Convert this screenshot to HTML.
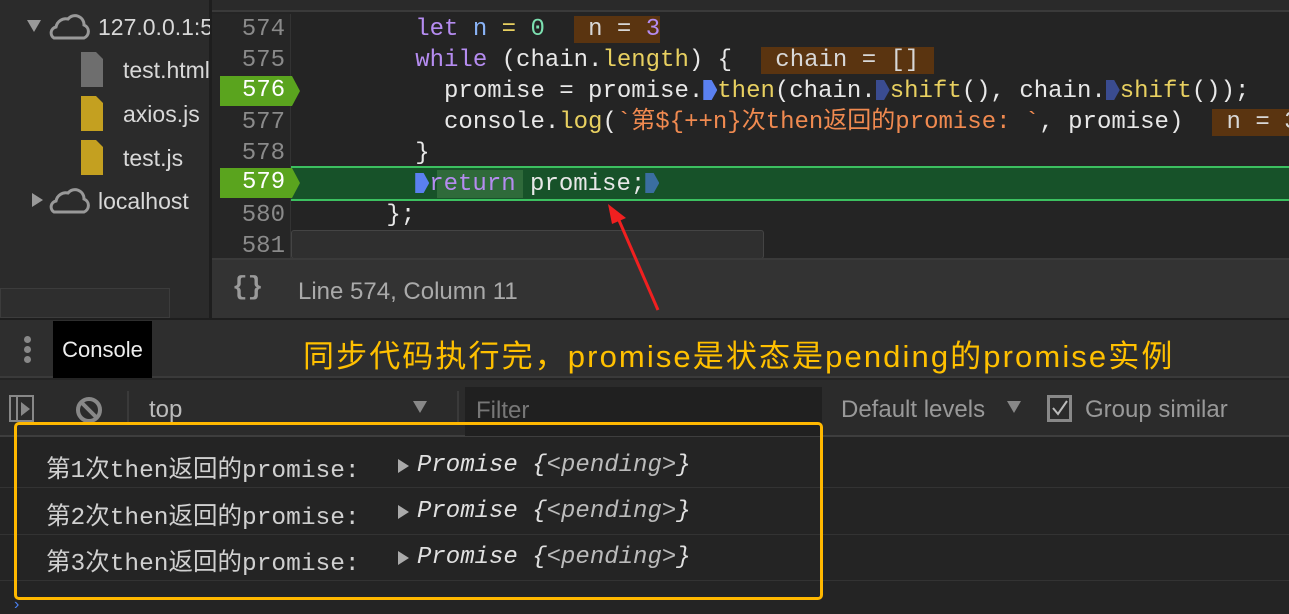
<!DOCTYPE html>
<html><head><meta charset="utf-8"><style>
*{margin:0;padding:0;box-sizing:border-box}
body{width:1289px;height:610px;overflow:hidden;background:#242424;position:relative;font-family:"Liberation Sans","Noto Sans CJK SC",sans-serif}
.abs{position:absolute}
.mono{font-family:"Liberation Mono","Noto Sans CJK SC",monospace;font-size:24px;white-space:pre}
.side{left:0;top:0;width:210px;height:318px;background:#2b2b2b}
.st{color:#d8d8d8;font-size:23px;white-space:nowrap}
.ln{color:#8a8a8a;text-align:right;width:72px;left:213px}
.code{left:300px;color:#e8e8e8}
.kw{color:#b58cf0}.num{color:#7ce0b0}.fn{color:#e8d060}.str{color:#f08a50}.var{color:#8ab4f8}
.val{background:#5a3410;color:#d8d8d8}
.bp{position:absolute;left:220px;width:80px;height:30px;background:#5aa41e;color:#fff;clip-path:polygon(0 0,72px 0,80px 50%,72px 100%,0 100%);padding-left:22px}
.mk{display:inline-block;width:14px;height:20px;vertical-align:-3px;clip-path:polygon(0 0,60% 0,100% 50%,60% 100%,0 100%)}
.cm{color:#d0d0d0;font-family:"Liberation Mono","Noto Sans CJK SC",monospace;font-size:24.5px;white-space:pre}
.pr{font-style:italic;color:#e0e0e0;font-size:24px}
</style></head><body>
<div class="abs side"></div>
<div class="abs" style="left:0;top:288px;width:170px;height:30px;border:1px solid #3c3c3c;background:#2e2e2e"></div>
<div class="abs" style="left:209px;top:0;width:3px;height:318px;background:#1e1e1e"></div>
<div class="abs" style="left:27px;top:20px;width:0;height:0;border-left:7px solid transparent;border-right:7px solid transparent;border-top:12px solid #999"></div>
<svg class="abs" style="left:48px;top:14px" width="42" height="26"><path d="M6 24 H36 A7 7 0 0 0 36 11 A9 9 0 0 0 20 5 A10 10 0 0 0 8 13 A6 6 0 0 0 6 24Z" fill="none" stroke="#999" stroke-width="3"/></svg>
<div class="abs st" style="left:98px;top:14px;width:112px;overflow:hidden">127.0.0.1:5</div>
<svg class="abs" style="left:81px;top:52px" width="24" height="36"><path d="M0 0H15L22 7V35H0Z" fill="#6e6e6e"/></svg>
<div class="abs st" style="left:123px;top:57px;width:87px;overflow:hidden">test.html</div>
<svg class="abs" style="left:81px;top:96px" width="24" height="36"><path d="M0 0H15L22 7V35H0Z" fill="#c4a020"/></svg>
<div class="abs st" style="left:123px;top:101px">axios.js</div>
<svg class="abs" style="left:81px;top:140px" width="24" height="36"><path d="M0 0H15L22 7V35H0Z" fill="#c4a020"/></svg>
<div class="abs st" style="left:123px;top:145px">test.js</div>
<div class="abs" style="left:32px;top:193px;width:0;height:0;border-top:7px solid transparent;border-bottom:7px solid transparent;border-left:11px solid #999"></div>
<svg class="abs" style="left:48px;top:188px" width="42" height="26"><path d="M6 24 H36 A7 7 0 0 0 36 11 A9 9 0 0 0 20 5 A10 10 0 0 0 8 13 A6 6 0 0 0 6 24Z" fill="none" stroke="#999" stroke-width="3"/></svg>
<div class="abs st" style="left:98px;top:188px">localhost</div>
<div class="abs" style="left:212px;top:0;width:1077px;height:12px;background:#2a2a2a;border-bottom:2px solid #3a3a3a"></div>
<div class="abs" style="left:212px;top:14px;width:79px;height:246px;background:#262626;border-right:1px solid #333"></div>
<div class="abs" style="left:291px;top:166px;width:998px;height:35px;background:#175229;border-top:2px solid #3cc060;border-bottom:2px solid #3cc060"></div>
<div class="abs" style="left:437px;top:170px;width:86px;height:28px;background:#2f6a3a"></div>
<div class="abs mono ln" style="top:14px;line-height:31px">574
575

577
578

580
581</div>
<div class="bp abs mono" style="top:76px;line-height:30px">576</div>
<div class="bp abs mono" style="top:168px;line-height:30px">579</div>
<div class="abs mono code" style="top:14px;line-height:31px">        <span class="kw">let</span> <span class="var">n</span> <span class="fn">=</span> <span class="num">0</span>  <span class="val"> n = <span class="kw">3</span></span>
        <span class="kw">while</span> (chain.<span class="fn">length</span>) {  <span class="val"> chain = [] </span>
          promise = promise.<span class="mk" style="background:#5a80f0"></span><span class="fn">then</span>(chain.<span class="mk" style="background:#3a4c90"></span><span class="fn">shift</span>(), chain.<span class="mk" style="background:#3a4c90"></span><span class="fn">shift</span>());
          console.<span class="fn">log</span>(<span class="str">`第${++n}次then返回的promise: `</span>, promise)  <span class="val"> n = 3 </span>
        }
        <span class="mk" style="background:#5a80f0"></span><span class="kw">return</span> promise;<span class="mk" style="background:#3a6ea0"></span>
      };</div>
<div class="abs" style="left:291px;top:230px;width:473px;height:29px;background:#2f2f2f;border:1px solid #444;border-radius:3px"></div>
<div class="abs" style="left:212px;top:258px;width:1077px;height:2px;background:#3a3a3a"></div>
<div class="abs" style="left:212px;top:260px;width:1077px;height:58px;background:#333"></div>
<div class="abs" style="left:232px;top:272px;color:#9a9a9a;font-size:26px;font-weight:bold;font-family:'Liberation Mono',monospace">{}</div>
<div class="abs" style="left:298px;top:278px;color:#aaa;font-size:24px">Line 574, Column 11</div>
<svg class="abs" style="left:600px;top:200px" width="70" height="115"><path d="M58 110 L18 18" stroke="#f02020" stroke-width="3"/><path d="M8 4 L26 18 L12 24Z" fill="#f02020"/></svg>
<div class="abs" style="left:0;top:318px;width:1289px;height:2px;background:#1e1e1e"></div>
<div class="abs" style="left:0;top:320px;width:1289px;height:58px;background:#2e2e2e;border-bottom:2px solid #3a3a3a"></div>
<div class="abs" style="left:24px;top:336px;width:7px;height:7px;border-radius:50%;background:#888;box-shadow:0 10px 0 #888,0 20px 0 #888"></div>
<div class="abs" style="left:53px;top:321px;width:99px;height:57px;background:#000;color:#eee;font-size:22px;line-height:57px;text-align:center">Console</div>
<div class="abs" style="left:303px;top:331px;color:#ffc000;font-size:31px;letter-spacing:2.1px;white-space:nowrap">同步代码执行完，promise是状态是pending的promise实例</div>
<div class="abs" style="left:0;top:380px;width:1289px;height:57px;background:#2b2b2b;border-bottom:2px solid #3e3e3e"></div>
<div class="abs" style="left:9px;top:395px;width:25px;height:27px;border:2px solid #888"></div>
<div class="abs" style="left:16px;top:395px;width:2px;height:27px;background:#888"></div>
<div class="abs" style="left:21px;top:402px;border-top:7px solid transparent;border-bottom:7px solid transparent;border-left:9px solid #888"></div>
<svg class="abs" style="left:74px;top:395px" width="30" height="30"><circle cx="15" cy="15" r="11" fill="none" stroke="#888" stroke-width="4"/><path d="M7 7 L23 23" stroke="#888" stroke-width="4"/></svg>
<div class="abs" style="left:127px;top:391px;width:2px;height:34px;background:#3a3a3a"></div>
<div class="abs" style="left:149px;top:396px;color:#bbb;font-size:24px">top</div>
<div class="abs" style="left:413px;top:401px;border-left:7px solid transparent;border-right:7px solid transparent;border-top:12px solid #888"></div>
<div class="abs" style="left:457px;top:391px;width:2px;height:34px;background:#3a3a3a"></div>
<div class="abs" style="left:465px;top:387px;width:357px;height:49px;background:#202020"></div>
<div class="abs" style="left:476px;top:397px;color:#777;font-size:24px">Filter</div>
<div class="abs" style="left:841px;top:396px;color:#999;font-size:24px">Default levels</div>
<div class="abs" style="left:1007px;top:401px;border-left:7px solid transparent;border-right:7px solid transparent;border-top:12px solid #888"></div>
<div class="abs" style="left:1047px;top:395px;width:25px;height:27px;border:3px solid #888"></div>
<svg class="abs" style="left:1050px;top:398px" width="20" height="20"><path d="M3 10 L8 16 L17 3" fill="none" stroke="#bbb" stroke-width="2"/></svg>
<div class="abs" style="left:1085px;top:396px;color:#999;font-size:24px">Group similar</div>
<div class="abs" style="left:0;top:487px;width:1289px;height:1px;background:#333"></div>
<div class="abs" style="left:0;top:534px;width:1289px;height:1px;background:#333"></div>
<div class="abs" style="left:0;top:580px;width:1289px;height:1px;background:#333"></div>
<div class="abs cm" style="left:46px;top:450px">第1次then返回的promise:</div>
<div class="abs cm" style="left:46px;top:497px">第2次then返回的promise:</div>
<div class="abs cm" style="left:46px;top:543px">第3次then返回的promise:</div>
<div class="abs" style="left:398px;top:459px;border-top:7px solid transparent;border-bottom:7px solid transparent;border-left:11px solid #aaa"></div>
<div class="abs" style="left:398px;top:505px;border-top:7px solid transparent;border-bottom:7px solid transparent;border-left:11px solid #aaa"></div>
<div class="abs" style="left:398px;top:551px;border-top:7px solid transparent;border-bottom:7px solid transparent;border-left:11px solid #aaa"></div>
<div class="abs cm pr" style="left:417px;top:452px">Promise {<span style="color:#bbb">&lt;pending&gt;</span>}</div>
<div class="abs cm pr" style="left:417px;top:498px">Promise {<span style="color:#bbb">&lt;pending&gt;</span>}</div>
<div class="abs cm pr" style="left:417px;top:544px">Promise {<span style="color:#bbb">&lt;pending&gt;</span>}</div>
<div class="abs" style="left:14px;top:422px;width:809px;height:178px;border:3px solid #ffb800;border-radius:5px"></div>
<div class="abs" style="left:14px;top:596px;color:#4a80f0;font-size:16px">›</div>
</body></html>
